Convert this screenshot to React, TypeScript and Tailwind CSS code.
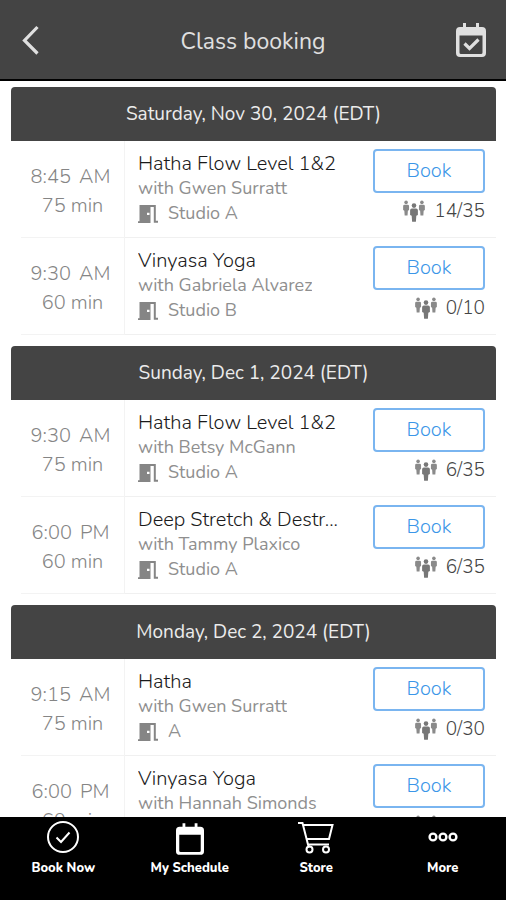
import type { ReactNode } from "react";

interface ClassItem {
  time: string;
  period: string;
  length: string;
  title: string;
  teacher: string;
  room: string;
  spots: string;
}

const SCHEDULE: { day: string; classes: ClassItem[] }[] = [
  {
    day: "Saturday, Nov 30, 2024 (EDT)",
    classes: [
      { time: "8:45", period: "AM", length: "75 min", title: "Hatha Flow Level 1&2", teacher: "Gwen Surratt", room: "Studio A", spots: "14/35" },
      { time: "9:30", period: "AM", length: "60 min", title: "Vinyasa Yoga", teacher: "Gabriela Alvarez", room: "Studio B", spots: "0/10" },
    ],
  },
  {
    day: "Sunday, Dec 1, 2024 (EDT)",
    classes: [
      { time: "9:30", period: "AM", length: "75 min", title: "Hatha Flow Level 1&2", teacher: "Betsy McGann", room: "Studio A", spots: "6/35" },
      { time: "6:00", period: "PM", length: "60 min", title: "Deep Stretch & Destr...", teacher: "Tammy Plaxico", room: "Studio A", spots: "6/35" },
    ],
  },
  {
    day: "Monday, Dec 2, 2024 (EDT)",
    classes: [
      { time: "9:15", period: "AM", length: "75 min", title: "Hatha", teacher: "Gwen Surratt", room: "A", spots: "0/30" },
      { time: "6:00", period: "PM", length: "60 min", title: "Vinyasa Yoga", teacher: "Hannah Simonds", room: "A", spots: "0/30" },
    ],
  },
];

function CalendarIcon({ checked, className }: { checked?: boolean; className: string }) {
  return (
    <svg viewBox="0 0 30 34" className={className} aria-hidden>
      <path
        fill="currentColor"
        fillRule="evenodd"
        d="M7 0h3v4h10V0h3v4h3a4 4 0 0 1 4 4v22a4 4 0 0 1-4 4H4a4 4 0 0 1-4-4V8a4 4 0 0 1 4-4h3V0ZM3.500 12.500v17a1.500 1.500 0 0 0 1.500 1.500h20a1.500 1.500 0 0 0 1.500-1.500v-17h-23Z"
      />
      {checked && <path d="m8.500 20.500 5 5 9-9" fill="none" stroke="currentColor" strokeWidth="3.200" />}
    </svg>
  );
}

function DoorIcon() {
  return (
    <svg viewBox="0 0 20 18" className="h-[18px] w-5 text-[#858585]" aria-hidden>
      <path fill="currentColor" fillRule="evenodd" d="M1.500 0h11v18H0v-1.800h1.500V0ZM9 7.800v2.200h2.500V7.800H9Z" />
      <path d="M12 1h4.800v15.800H20" fill="none" stroke="currentColor" strokeWidth="2" />
    </svg>
  );
}

function PeopleIcon() {
  // head centred on x = 0, torso and arms taper down into the legs
  const body = "M-2 4.800h4a1.700 1.700 0 0 1 1.700 1.700v4.300l-1.500.8-.4 5.400h-3.600l-.4-5.400-1.500-.8V6.500a1.700 1.700 0 0 1 1.700-1.700Z";
  return (
    <svg viewBox="0 0 22 22" className="h-[22px] w-[22px]" aria-hidden>
      <g fill="#8a8a8a">
        <g transform="translate(3.100 .5) scale(.8 .88)">
          <circle cy="2.100" r="2.200" />
          <path d={body} />
        </g>
        <g transform="translate(18.900 .5) scale(.8 .88)">
          <circle cy="2.100" r="2.200" />
          <path d={body} />
        </g>
      </g>
      <g transform="translate(11 3.300) scale(1.050 1.080)" fill="#777">
        <circle cy="2.100" r="2.200" />
        <path d={body} />
      </g>
    </svg>
  );
}

function ClassRow({ item }: { item: ClassItem }) {
  return (
    <li className="flex h-[97px]">
      <div className="ml-[10px] flex w-[104px] shrink-0 flex-col justify-center border-r border-b border-[#f3f3f3] pt-[3px] text-center text-[20px] leading-[29px] text-[#858585]">
        <p className="flex justify-center gap-2 pr-1">
          <span>{item.time}</span>
          <span>{item.period}</span>
        </p>
        <p>{item.length}</p>
      </div>
      <div className="flex min-w-0 flex-1 justify-between border-b border-[#f0f0f0] pr-[11px] pl-[13px]">
        <div className="min-w-0 pt-[10px] text-[18px] leading-[25px] font-normal text-[#8f8f8f]">
          <h3 className="truncate text-[20px] font-light text-[#1a1a1a]">{item.title}</h3>
          <p className="truncate">with {item.teacher}</p>
          <p className="flex items-center gap-[10px]">
            <DoorIcon />
            {item.room}
          </p>
        </div>
        <div className="flex shrink-0 flex-col items-end pt-2">
          <button
            type="button"
            aria-label={`Book ${item.title}`}
            className="h-[44px] w-[112px] rounded-[4px] border-2 border-[#7ab5f0] bg-white text-[20px] leading-[24px] text-[#3b96e8]"
          >
            Book
          </button>
          <p className="mt-[6px] flex items-center gap-[9px] text-[19px] leading-[24px] text-[#444]">
            <PeopleIcon />
            {item.spots}
          </p>
        </div>
      </div>
    </li>
  );
}

function NavItem({ label, children }: { label: string; children: ReactNode }) {
  return (
    <a href="#" className="flex flex-1 flex-col items-center gap-1 pt-[3px] text-[13px] leading-[20px] font-extrabold text-white">
      <span className="flex h-[34px] items-center">{children}</span>
      {label}
    </a>
  );
}

export default function App() {
  return (
    <div className="flex h-dvh flex-col overflow-hidden bg-white font-['Nunito','Open_Sans',sans-serif] font-light">
      <header className="flex shrink-0 items-center justify-between border-b-2 border-black bg-[#444] px-5 pt-4 pb-[15px] text-[#e0e0e0]">
        <button type="button" aria-label="Back" className="flex h-12 w-[31px] items-center">
          <svg viewBox="0 0 20 30" className="h-[30px] w-5" aria-hidden>
            <path d="M17.500 2 4.500 15.500l13 13" fill="none" stroke="currentColor" strokeWidth="3.200" />
          </svg>
        </button>
        <h1 className="pt-1 text-[23px] leading-[30px] font-normal">Class booking</h1>
        <button type="button" aria-label="My bookings" className="flex h-12 w-[31px] items-center justify-end">
          <CalendarIcon checked className="h-[34px] w-[30px]" />
        </button>
      </header>

      <main className="min-h-0 flex-1 overflow-y-auto pt-[6px] pr-[10px] pl-[11px] [scrollbar-width:none]">
        {SCHEDULE.map(({ day, classes }) => (
          <section key={day} className="mb-[11px]">
            <h2 className="rounded-t-[4px] bg-[#444] py-[13px] text-center text-[19px] leading-[28px] font-normal text-[#ececec]">
              {day}
            </h2>
            <ul>
              {classes.map((item) => (
                <ClassRow key={item.time + item.title} item={item} />
              ))}
            </ul>
          </section>
        ))}
      </main>

      <nav className="flex h-[83px] shrink-0 bg-black">
        <NavItem label="Book Now">
          <svg viewBox="0 0 32 32" className="h-8 w-8" fill="none" stroke="currentColor" strokeWidth="2" aria-hidden>
            <circle cx="16" cy="16" r="15" />
            <path d="m9.500 16.500 4.500 4.500 8.500-9.500" />
          </svg>
        </NavItem>
        <NavItem label="My Schedule">
          <CalendarIcon className="mt-1 h-8 w-7" />
        </NavItem>
        <NavItem label="Store">
          <svg viewBox="0 0 36 33" className="h-[33px] w-9" fill="none" stroke="currentColor" strokeWidth="2" aria-hidden>
            <path d="M0 2h4.500l5.500 21.500h21M5.500 4h29L31 18H9M10 23.500l1 3" />
            <circle cx="11.500" cy="28.500" r="3" />
            <circle cx="28" cy="28.500" r="3" />
          </svg>
        </NavItem>
        <NavItem label="More">
          <svg viewBox="0 0 30 10" className="h-[10px] w-[30px]" fill="none" stroke="currentColor" strokeWidth="2.400" aria-hidden>
            <circle cx="5" cy="5" r="3.400" />
            <circle cx="15" cy="5" r="3.400" />
            <circle cx="25" cy="5" r="3.400" />
          </svg>
        </NavItem>
      </nav>
    </div>
  );
}
